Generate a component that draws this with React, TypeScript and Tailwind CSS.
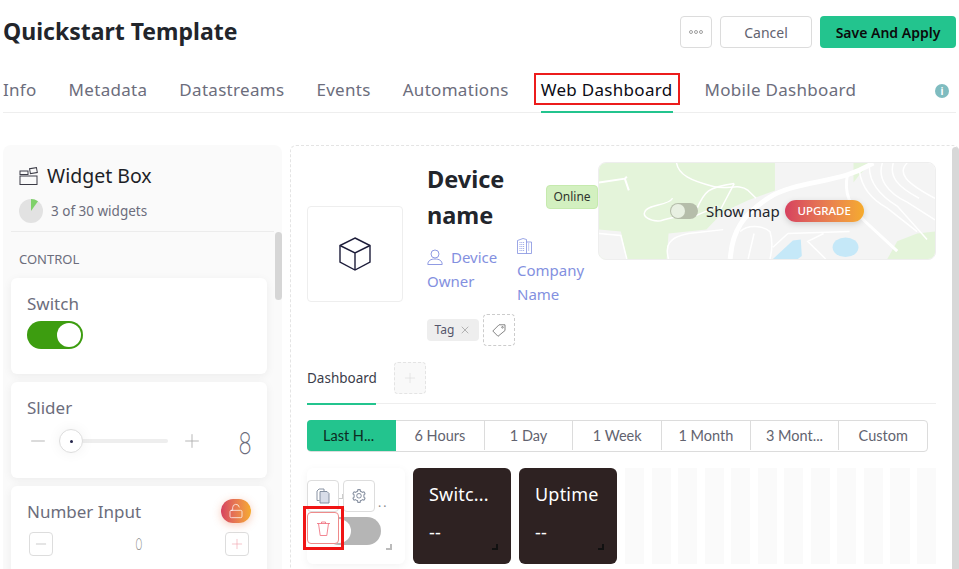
import { LockOpen, Minus, Plus, X } from "lucide-react";
import { AiOutlineSetting } from "react-icons/ai";

const tabs = ["Info", "Metadata", "Datastreams", "Events", "Automations"];
const ranges = ["6 Hours", "1 Day", "1 Week", "1 Month", "3 Mont...", "Custom"];
const stripes = [0, 1, 2, 3, 4, 5, 6, 7, 8, 9, 10, 11];

function MapArt() {
  return (
    <svg viewBox="0 0 338 98" className="absolute inset-0 h-full w-full" preserveAspectRatio="none">
      <rect width="338" height="98" fill="#f4f4f4" />
      <path d="M0 0H177V28L150 38L125 50L108 68L70 72L68 98H0Z" fill="#e4f4da" />
      <path d="M256 0H275L262 12L256 20Z" fill="#e4f4da" />
      <path d="M290 98L300 80L320 72L338 70V98Z" fill="#e4f4da" />
      <path d="M0 68L22 70L28 98H0Z" fill="#f4f4f4" />
      <path d="M0 20L26 16L28 14M26 16L30 28" fill="none" stroke="#fff" strokeWidth="2" />
      <path d="M78 0C80 12 92 18 115 24C130 28 140 20 150 28L158 36" fill="none" stroke="#fff" strokeWidth="1.5" />
      <path d="M136 21C110 25 106 28 98 48C92 54 78 54 62 59C50 60 44 54 46 50C48 42 70 44 74 36" fill="none" stroke="#fff" strokeWidth="1.5" />
      <path d="M136 21L122 48M92 56L120 44" fill="none" stroke="#fff" strokeWidth="1.5" />
      <path d="M132 98C134 68 146 52 170 36C190 22 225 20 250 12C265 7 272 2 276 0" fill="none" stroke="#fff" strokeWidth="5" />
      <path d="M250 12C246 30 252 44 268 60L300 90" fill="none" stroke="#fff" strokeWidth="3" />
      <path d="M262 8C264 24 272 36 290 46L320 70M285 0C280 16 290 30 310 40L338 58M310 0C300 10 308 20 338 36M272 4C272 20 284 34 300 44L330 78M296 0C292 14 300 24 322 36" fill="none" stroke="#fff" strokeWidth="1.5" />
      <path d="M70 98C66 84 70 76 90 72L125 68M142 70C150 62 165 64 172 70C175 80 174 90 172 98M150 98L156 72M190 72L252 70M190 72L175 86M226 72L210 80L228 98M0 72L22 74L28 98" fill="none" stroke="#fff" strokeWidth="1.5" />
      <path d="M175 98L195 79L203 78L204 95L200 98Z" fill="#c5e8f8" />
      <ellipse cx="248" cy="86" rx="13" ry="10" fill="#c5e8f8" />
    </svg>
  );
}

export default function App() {
  return (
    <div className="h-[569px] w-[959px] overflow-hidden bg-white font-['Noto_Sans',sans-serif]">
      {/* top bar */}
      <div className="flex h-[64px] items-start justify-between pt-4 pl-[3px] pr-[3px]">
        <h1 className="text-[23px] leading-[30px] font-bold text-[#22252b]">Quickstart Template</h1>
        <div className="flex gap-2">
          <button className="flex h-8 w-8 items-center justify-center gap-px rounded border border-[#dcdcdc]">
            <span className="h-1 w-1 rounded-full border border-[#a0a0a0]" />
            <span className="h-1 w-1 rounded-full border border-[#a0a0a0]" />
            <span className="h-1 w-1 rounded-full border border-[#a0a0a0]" />
          </button>
          <button className="h-8 w-[92px] rounded border border-[#dcdcdc] text-[14px] text-[#62636f]">Cancel</button>
          <button className="h-8 w-[136px] rounded bg-[#23c48e] text-[14px] font-semibold text-[#0b0b0b]">Save And Apply</button>
        </div>
      </div>

      {/* tabs */}
      <div className="relative mx-[3px] flex h-[49px] items-start gap-8 border-b border-[#eeeeee] pt-[14px]">
        {tabs.map((t) => (
          <span key={t} className="text-[17px] leading-6 tracking-[0.3px] text-[#6c6d7c]">{t}</span>
        ))}
        <span className="relative h-[35px] text-[17px] leading-6 tracking-[0.3px] text-[#0b0b14]">
          Web Dashboard
          <span className="absolute -inset-x-[7px] -top-[5px] h-8 border-2 border-[#ec1c1c]" />
          <span className="absolute inset-x-0 bottom-0 h-[2px] bg-[#23c48e]" />
        </span>
        <span className="text-[17px] leading-6 tracking-[0.3px] text-[#6c6d7c]">Mobile Dashboard</span>
        <span className="absolute top-[20px] right-[7px] flex h-[14px] w-[14px] items-center justify-center rounded-full bg-[#7fbcc0] text-[10px] font-bold text-white">i</span>
      </div>

      <div className="mt-8 flex h-[424px] pl-[3px]">
        {/* widget box */}
        <aside className="relative h-[460px] w-[279px] shrink-0 rounded-t-lg bg-[#fafafa] pl-2">
          <div className="mr-[8px] h-[87px] border-b border-[#ececec] pl-2">
            <div className="flex h-[54px] items-center gap-2 pt-2">
              <svg width="20" height="20" viewBox="0 0 20 20" fill="none" stroke="#3b3b46" strokeWidth="1">
                <rect x="1" y="10" width="17" height="8.5" />
                <rect x="1" y="5" width="8" height="3.5" />
                <rect x="11" y="2.2" width="7" height="5" transform="rotate(-10 14 5)" />
              </svg>
              <span className="text-[19.5px] text-[#1d1f27]">Widget Box</span>
            </div>
            <div className="flex items-center gap-2">
              <svg width="24" height="24" viewBox="0 0 24 24">
                <circle cx="12" cy="12" r="12" fill="#e2e2e2" />
                <path d="M12 12V0A12 12 0 0 1 19 2.3Z" fill="#7fd16a" />
              </svg>
              <span className="text-[13.5px] text-[#6c6d7c]">3 of 30 widgets</span>
            </div>
          </div>
          <div className="absolute top-[87px] right-0 h-[68px] w-[7px] rounded bg-[#d6d6d6]" />
          <div className="pt-[18px] pb-[9px] pl-2 text-[13px] leading-[19px] text-[#6c6d7c]">CONTROL</div>

          <div className="flex w-[256px] flex-col gap-2">
            <div className="h-[96px] rounded-md bg-white px-4 pt-[14px] shadow-[0_2px_10px_rgba(0,0,0,0.06)]">
              <div className="text-[17px] leading-6 text-[#6c6d7c]">Switch</div>
              <div className="mt-[5px] flex h-7 w-14 items-center justify-end rounded-full bg-[#3d9d10] pr-[2px]">
                <span className="h-6 w-6 rounded-full bg-white" />
              </div>
            </div>
            <div className="h-[96px] rounded-md bg-white px-4 pt-[14px] shadow-[0_2px_10px_rgba(0,0,0,0.06)]">
              <div className="text-[17px] leading-6 text-[#6c6d7c]">Slider</div>
              <div className="mt-[5px] flex h-8 items-center">
                <Minus size={22} strokeWidth={0.9} className="text-[#a8a8a8]" />
                <div className="relative ml-[10px] h-1 w-[109px] rounded bg-[#eeeeee]">
                  <span className="absolute top-[-10px] left-0 flex h-6 w-6 items-center justify-center rounded-full border border-[#dddddd] bg-white shadow-[0_0_14px_rgba(0,0,0,0.06)]">
                    <span className="h-[3px] w-[3px] rounded-full bg-[#23244a]" />
                  </span>
                </div>
                <Plus size={22} strokeWidth={0.9} className="ml-[13px] text-[#a8a8a8]" />
                <span className="ml-auto -mr-[3px] scale-x-75 pt-[3px] font-['Inter',sans-serif] text-[30px] leading-8 font-extralight text-[#6c6d7c]">8</span>
              </div>
            </div>
            <div className="relative h-[96px] rounded-md bg-white px-4 pt-[14px] shadow-[0_2px_10px_rgba(0,0,0,0.06)]">
              <div className="text-[17px] leading-6 text-[#6c6d7c]">Number Input</div>
              <span className="absolute top-[13px] right-[16px] flex h-6 w-[30px] items-center justify-center rounded-full bg-gradient-to-r from-[#d6415f] to-[#f5ab2c] shadow-[0_2px_8px_rgba(230,110,60,0.35)]">
                <LockOpen size={16} strokeWidth={1.1} className="text-white" />
              </span>
              <div className="mt-[8px] flex items-center justify-between pl-[2px] pr-[2px]">
                <span className="flex h-6 w-6 items-center justify-center rounded border border-[#dddddd]">
                  <Minus size={16} strokeWidth={0.9} className="text-[#a8a8a8]" />
                </span>
                <span className="scale-x-75 font-['Inter',sans-serif] text-[16px] font-extralight text-[#8a8a8a]">0</span>
                <span className="flex h-6 w-6 items-center justify-center rounded border border-[#dddddd]">
                  <Plus size={16} strokeWidth={0.9} className="text-[#f0a0a8]" />
                </span>
              </div>
            </div>
          </div>
        </aside>

        {/* dashboard editor */}
        <main className="relative ml-2 h-[460px] flex-1 rounded-t-md border-t border-l border-dashed border-[#e4e4e4] pr-[23px] pl-4">
          <div className="absolute top-px right-0 bottom-0 w-[7px] rounded-t bg-[#d8d8d8]" />
          <div className="flex h-[200px] items-start">
            <div className="mt-[60px] flex h-24 w-24 shrink-0 items-center justify-center rounded border border-[#eeeeee]">
              <svg width="34" height="34" viewBox="0 0 34 34" fill="none" stroke="#1d1d3a" strokeWidth="1.4">
                <path d="M17 1L32 8.5V25L17 33L2 25V8.5Z" />
                <path d="M2 8.5L17 16L32 8.5M17 16V33" />
              </svg>
            </div>
            <div className="ml-6 flex w-[171px] shrink-0 flex-col pt-[15px]">
              <div className="flex items-start">
                <h2 className="w-[119px] text-[23.5px] leading-9 font-bold text-[#22252b]">Device name</h2>
                <span className="mt-[24px] flex h-6 w-[52px] items-center justify-center rounded border border-[#c6eaae] bg-[#d3f0c0] text-[12px] text-[#30342e]">Online</span>
              </div>
              <div className="flex text-[#8390e0]">
                <div className="mt-[12px] w-[90px] text-[15px] leading-6">
                  <svg width="16" height="16" viewBox="0 0 16 16" fill="none" stroke="#8390e0" strokeWidth="0.9" className="mr-2 inline align-[-2px]">
                    <circle cx="8" cy="5" r="4" />
                    <path d="M.8 15.5C.8 11.5 4 10 8 10S15.2 11.5 15.2 15.5Z" />
                  </svg>
                  Device Owner
                </div>
                <div className="w-[81px] pt-[5px] text-[15px] leading-6">
                  <svg width="15" height="16" viewBox="0 0 15 16" fill="none" stroke="#8390e0" strokeWidth="0.8">
                    <path d="M.5 15.5V2.5L6 .5L9.5 1.5V15.5M9.5 4H14.5V15.5H.5" />
                    <path d="M2.5 4.5H7.5M2.5 6.5H7.5M2.5 8.5H7.5M2.5 10.5H7.5M2.5 12.5H7.5M11 6H13M11 8H13M11 10H13M11 12H13" strokeDasharray="1 .8" />
                  </svg>
                  <div className="mt-1">Company Name</div>
                </div>
              </div>
              <div className="mt-[8px] flex items-center gap-1">
                <span className="flex h-[22px] w-[52px] items-center justify-center gap-[5px] rounded bg-[#eeeeee] text-[12px] text-[#55566a]">
                  Tag <X size={12} strokeWidth={1} className="text-[#777777]" />
                </span>
                <span className="flex h-8 w-8 items-center justify-center rounded border border-dashed border-[#cccccc]">
                  <svg width="14" height="13" viewBox="0 0 14 13" fill="none" stroke="#777777" strokeWidth="0.9">
                    <path d="M7 .8H13V6.5L6 12.3L.8 7Z" />
                    <circle cx="10.5" cy="3.3" r=".8" />
                  </svg>
                </span>
              </div>
            </div>
            <div className="relative mt-[16px] h-[98px] w-[338px] shrink-0 overflow-hidden rounded-lg border border-[#eeeeee]">
              <MapArt />
              <div className="absolute inset-0 flex items-center gap-2 pl-[71px]">
                <span className="flex h-4 w-7 items-center rounded-full bg-[#b5bdaa] pl-px">
                  <span className="h-[14px] w-[14px] rounded-full bg-[#e8f0e2]" />
                </span>
                <span className="text-[15px] text-[#22252b]">Show map</span>
                <span className="-ml-[3px] flex h-[22px] w-[79px] items-center justify-center rounded-full bg-gradient-to-r from-[#d6415f] to-[#f5ab2c] text-[11.5px] font-medium text-white shadow-[0_2px_6px_rgba(0,0,0,0.15)]">UPGRADE</span>
              </div>
            </div>
          </div>

          {/* dashboard tab row */}
          <div className="flex h-[58px] items-start gap-[18px] border-b border-[#eeeeee] pt-[16px]">
            <span className="relative h-[42px] w-[69px] pt-[5px] text-[13.5px] leading-[22px] text-[#3b3d4a]">
              Dashboard
              <span className="absolute inset-x-0 bottom-[-1px] h-[2px] bg-[#23c48e]" />
            </span>
            <span className="flex h-8 w-8 items-center justify-center rounded border border-dashed border-[#e4e4e4] bg-[#f9f9f9]">
              <Plus size={16} strokeWidth={1} className="text-[#dddddd]" />
            </span>
          </div>

          {/* time ranges */}
          <div className="mt-4 flex h-8 w-[621px] rounded border border-[#dcdcdc] pb-px font-['Lato',sans-serif] text-[14.5px] text-[#62636f]">
            <span className="-my-px -ml-px flex w-[89px] items-center rounded-l bg-[#23c48e] pl-4 text-[#0d2b22]">Last H...</span>
            {ranges.map((r) => (
              <span key={r} className="flex flex-1 items-center justify-center border-r border-[#dcdcdc] last:border-r-0">{r}</span>
            ))}
          </div>

          {/* widgets */}
          <div className="mt-4 flex h-24 gap-2">
            <div className="relative h-24 w-[98px] shrink-0 rounded-md bg-white shadow-[0_2px_8px_rgba(0,0,0,0.05)]">
              <div className="absolute top-[49px] left-[18px] flex h-7 w-14 items-center rounded-full bg-[#b5b5b5] pl-[2px]">
                <span className="h-6 w-6 rounded-full bg-white" />
              </div>
              <span className="absolute top-[26px] left-[71px] text-[12px] tracking-[2px] text-[#888888]">..</span>
              <span className="absolute top-[26px] left-[32px] h-[5px] w-1 border-r border-b border-[#cccccc]" />
              <span className="absolute top-[12px] left-0 flex h-8 w-8 items-center justify-center rounded border border-[#dddddd] bg-white">
                <svg width="14" height="16" viewBox="0 0 14 16" fill="none" stroke="#7b8798" strokeWidth="0.9">
                  <path d="M3.5 12.5H1V3L3 1H8V3" />
                  <path d="M4 3.5H11L13 5.5V15H4Z" fill="#d8dde8" />
                </svg>
              </span>
              <span className="absolute top-[12px] left-9 flex h-8 w-8 items-center justify-center rounded border border-[#dddddd] bg-white">
                <AiOutlineSetting size={16} className="text-[#8a93a3]" />
              </span>
              <span className="absolute top-[44px] left-0 flex h-8 w-8 items-center justify-center rounded border border-[#ef8a8a] bg-white">
                <svg width="13" height="15" viewBox="0 0 13 15" fill="none" stroke="#ef6a78" strokeWidth="0.8">
                  <path d="M0 2.5H13M4.5 2.5V1H8.5V2.5M1.5 2.5L3.2 14.5H9.8L11.5 2.5" />
                </svg>
              </span>
              <span className="absolute top-[38px] -left-[4px] h-[44px] w-[41px] border-[3px] border-[#f01414]" />
              <span className="absolute right-[13px] bottom-[14px] h-[6px] w-[6px] border-r-2 border-b-2 border-[#bbbbbb]" />
            </div>
            {["Switc...", "Uptime"].map((name) => (
              <div key={name} className="relative h-24 w-[98px] shrink-0 rounded-md bg-[#2e2222] px-4 pt-[14px] text-[18px] tracking-[0.2px] text-white">
                <div className="leading-6">{name}</div>
                <div className="mt-[14px] leading-6">--</div>
                <span className="absolute right-[13px] bottom-[14px] h-[6px] w-[6px] border-r-2 border-b-2 border-[#111111]" />
              </div>
            ))}
            <div className="flex h-24 flex-1 gap-[7.5px]">
              {stripes.map((s) => (
                <span key={s} className="flex-1 bg-[#fafafa]" />
              ))}
            </div>
          </div>
        </main>
      </div>
    </div>
  );
}
